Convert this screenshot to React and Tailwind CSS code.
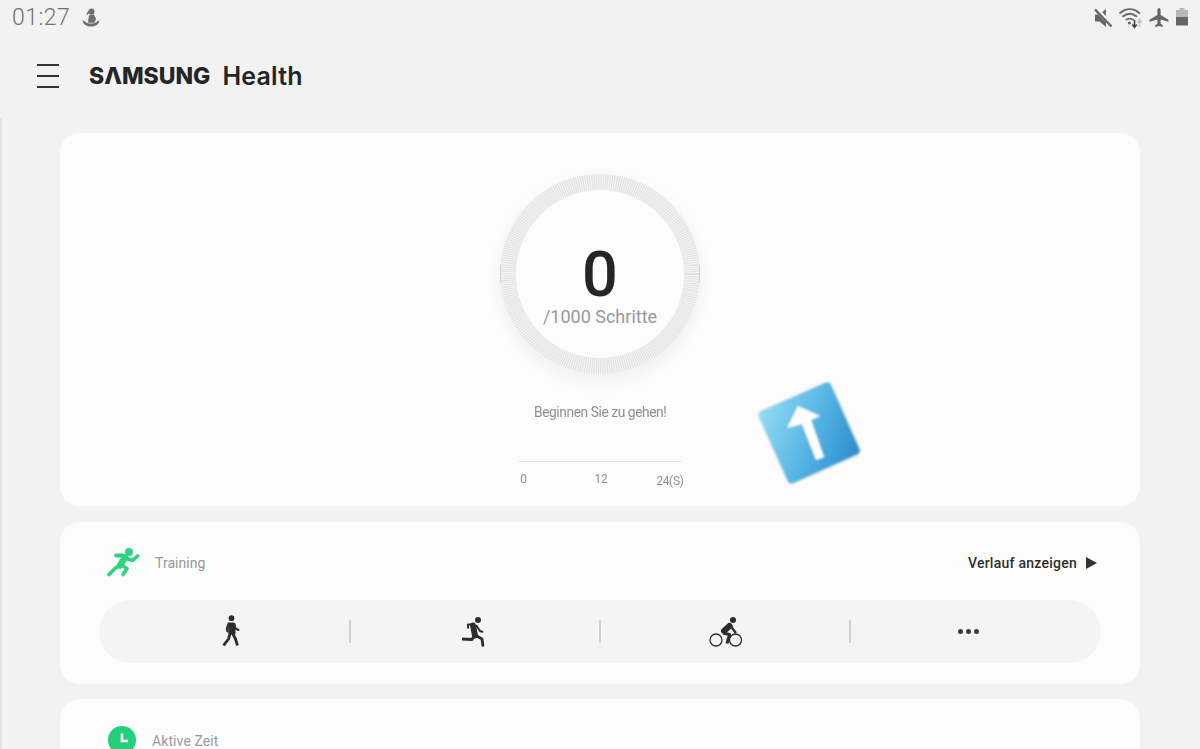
import React from "react";

const roboto = { fontFamily: "Roboto, sans-serif" };
const inter = { fontFamily: "Inter, sans-serif" };

function MuteIcon() {
  return (
    <svg width="20" height="20" viewBox="0 0 20 20" className="text-[#666]">
      <path d="M2 6.500h4.500L13 1v18l-6.500-5.500H2z" fill="currentColor" />
      <path d="M2 0 L19 17.500" stroke="#f2f2f2" strokeWidth="4.500" />
      <path d="M2 1.500 L18.500 18.500" stroke="currentColor" strokeWidth="2.400" />
    </svg>
  );
}

function WifiIcon() {
  return (
    <svg width="26" height="22" viewBox="0 0 26 22" fill="none" className="text-[#6a6a6a]">
      <path d="M1.500 6.500C8 0.800 15.500 .8 22 6.500" stroke="currentColor" strokeWidth="1.800" />
      <path d="M4.500 9.800C9 6 14.500 6 19 9.800" stroke="currentColor" strokeWidth="1.800" />
      <path d="M7.800 13C10.500 11 13 11 15.800 13" stroke="currentColor" strokeWidth="1.800" />
      <circle cx="11.500" cy="16" r="1.600" fill="currentColor" />
      <path d="M16.500 13v7M14.300 17.500l2.200 3 2.200-3" stroke="#444" strokeWidth="1.600" />
      <path d="M21.500 20v-7M19.600 15.500l1.900-3 1.900 3" stroke="#c4c4c4" strokeWidth="1.600" />
    </svg>
  );
}

function PlaneIcon() {
  return (
    <svg width="20" height="20" viewBox="0 0 20 20" className="text-[#666]">
      <path d="M10 0c1 0 1.600 1.200 1.600 2.600V7l7.900 4.700v2L11.600 11.400v4.200l2.300 1.800V19L10 18l-3.900 1v-1.600l2.300-1.800v-4.200L.5 13.700v-2L8.400 7V2.600C8.400 1.200 9 0 10 0z" fill="currentColor" />
    </svg>
  );
}

function BatteryIcon() {
  return (
    <svg width="12" height="19" viewBox="0 0 12 19">
      <rect x="3.500" y="0" width="5" height="2" fill="#b8b8b8" />
      <rect x="0" y="2" width="12" height="7" fill="#b8b8b8" />
      <rect x="0" y="9" width="12" height="8.500" fill="#666" />
    </svg>
  );
}

function PersonIcon() {
  return (
    <svg width="18" height="20" viewBox="0 0 18 20" fill="none" className="text-[#6e6e6e]">
      <circle cx="9.500" cy="3.500" r="3" fill="currentColor" />
      <path d="M7 3C5.500 3.500 4 5 5 7.500C5.800 6 6.500 5.500 7.500 5.500z" fill="currentColor" />
      <path d="M7.500 6.500h4.500L14 11l-1.500 3.800H6L6.500 10z" fill="currentColor" />
      <path d="M.8 12C.5 16 4 18.500 9 18.500s8.500-2.500 8.200-6.500l-2.700 2C13 15.500 11 15.500 9 15.500s-4-.2-5.500-1.500z" fill="currentColor" />
    </svg>
  );
}

function GreenRunner() {
  return (
    <svg width="34" height="31" viewBox="0 0 34 31" fill="none">
      <circle cx="22" cy="5" r="4" fill="#2fd37f" />
      <path d="M9 8.500h6" stroke="#2fd37f" strokeWidth="4" strokeLinecap="round" />
      <path d="M15 8.500l6 3.500 4.500 1.500 5-4.500" stroke="#2fd37f" strokeWidth="3.600" strokeLinecap="round" strokeLinejoin="round" />
      <path d="M18 10.500l-5 8" stroke="#2fd37f" strokeWidth="6.500" strokeLinecap="round" />
      <path d="M13 18l-5 3.500-6 6" stroke="#2fd37f" strokeWidth="3.600" strokeLinecap="round" strokeLinejoin="round" />
      <path d="M15 18.500l5 3-4 6" stroke="#2fd37f" strokeWidth="3.600" strokeLinecap="round" strokeLinejoin="round" />
    </svg>
  );
}

function WalkIcon() {
  return (
    <svg width="18" height="32" viewBox="0 0 18 32" fill="none">
      <circle cx="9.500" cy="3.200" r="2.900" fill="#2b2e2b" />
      <path d="M6.500 8h5.500l1 6v5H7z" fill="#2b2e2b" stroke="#2b2e2b" strokeWidth="1" strokeLinejoin="round" />
      <path d="M6.500 8.500L4.800 13.500l.6 3" stroke="#2b2e2b" strokeWidth="2" strokeLinecap="round" />
      <path d="M12.500 9l1 4.500 3 1.500" stroke="#2b2e2b" strokeWidth="2" strokeLinecap="round" />
      <path d="M8.200 18l-1.700 6-5 6.500" stroke="#2b2e2b" strokeWidth="2.800" strokeLinejoin="round" />
      <path d="M10.500 18l3 6 2 6.500" stroke="#2b2e2b" strokeWidth="2.800" strokeLinejoin="round" />
    </svg>
  );
}

function RunIcon() {
  return (
    <svg width="26" height="31" viewBox="0 0 26 31" fill="none">
      <circle cx="17" cy="4" r="3" fill="#2b2e2b" />
      <path d="M12 9.500l2 10" stroke="#2b2e2b" strokeWidth="6" strokeLinecap="round" />
      <path d="M13 8.500H7L7 12.500" stroke="#2b2e2b" strokeWidth="2" strokeLinejoin="round" />
      <path d="M15 9l4 6 3 1" stroke="#2b2e2b" strokeWidth="2" strokeLinejoin="round" />
      <path d="M13 20l-2 3.500-10 -.5" stroke="#2b2e2b" strokeWidth="2.800" strokeLinejoin="round" />
      <path d="M15 19.500l6 3.500 1 7.500" stroke="#2b2e2b" strokeWidth="2.800" strokeLinejoin="round" />
    </svg>
  );
}

function BikeIcon() {
  return (
    <svg width="34" height="31" viewBox="0 0 34 31" fill="none">
      <circle cx="24" cy="4" r="3" fill="#2b2e2b" />
      <circle cx="7" cy="24" r="6" stroke="#2b2e2b" strokeWidth="1.300" />
      <circle cx="26.500" cy="24" r="6" stroke="#2b2e2b" strokeWidth="1.300" />
      <path d="M20.500 10L15 15" stroke="#2b2e2b" strokeWidth="6" strokeLinecap="round" />
      <path d="M21 9l5.500 7.500" stroke="#2b2e2b" strokeWidth="2.200" strokeLinecap="round" />
      <path d="M14 17l6.500 1.500-2.500 9" stroke="#2b2e2b" strokeWidth="3" strokeLinejoin="round" />
    </svg>
  );
}

function StepRing() {
  return (
    <svg width="240" height="240" viewBox="0 0 240 240" className="absolute left-[-20px] top-[-20px]" fill="none">
      <defs>
        <filter id="ringShadow" x="-30%" y="-30%" width="160%" height="160%">
          <feDropShadow dx="0" dy="7" stdDeviation="8" floodColor="#000" floodOpacity="0.05" />
        </filter>
      </defs>
      <circle cx="120" cy="120" r="100" fill="#fcfcfc" filter="url(#ringShadow)" />
      <circle cx="120" cy="120" r="92" stroke="#f4f4f4" strokeWidth="16" />
      <circle cx="120" cy="120" r="92" stroke="#e0e0e0" strokeWidth="16" strokeDasharray="1 1.200" />
      <path d="M20.500 111v18M219.500 111v18" stroke="#d4d4d4" strokeWidth="1" />
    </svg>
  );
}

function ArrowTile() {
  return (
    <svg width="116" height="116" viewBox="0 0 116 116" className="absolute left-[751px] top-[374px]">
      <defs>
        <linearGradient id="tile" x1="0" y1="0" x2="1" y2="1">
          <stop offset="0" stopColor="#93dcf5" />
          <stop offset="0.5" stopColor="#58b6e4" />
          <stop offset="1" stopColor="#2a8ccd" />
        </linearGradient>
        <filter id="soft" x="-20%" y="-20%" width="140%" height="140%">
          <feGaussianBlur stdDeviation="0.800" />
        </filter>
      </defs>
      <g filter="url(#soft)">
        <g transform="rotate(-24 58 58)">
          <rect x="18" y="19" width="80" height="80" rx="5" fill="#b9d6e6" />
          <rect x="19" y="20" width="78" height="78" rx="4" fill="url(#tile)" />
        </g>
        <path d="M47 32 L69 42 L60 46 L73 83 L65 86 L51 50 L36 54 Z" fill="#fff" />
      </g>
    </svg>
  );
}

export default function App() {
  return (
    <div className="relative h-[749px] w-[1200px] overflow-hidden bg-[#f2f2f2]" style={roboto}>
      <div className="flex h-[35px] items-center justify-between pl-3 pr-3">
        <div className="flex items-center gap-[12px]">
          <span className="mt-[2px] text-[23px] font-light tracking-[0.5px] text-[#707070]">01:27</span>
          <PersonIcon />
        </div>
        <div className="flex items-center gap-[5px]">
          <span className="ml-[2px]"><MuteIcon /></span>
          <WifiIcon />
          <PlaneIcon />
          <span className="ml-[2px]"><BatteryIcon /></span>
        </div>
      </div>

      <div className="flex h-[83px] items-center pb-[1px] pl-[37px]">
        <div className="mr-[30px] flex h-[24px] w-[22px] flex-col justify-between">
          <div className="h-[2px] bg-[#333]" />
          <div className="h-[2px] bg-[#333]" />
          <div className="h-[2px] bg-[#333]" />
        </div>
        <span className="text-[23px] font-extrabold tracking-[0px] text-[#252525]" style={inter}>SΛMSUNG</span>
        <span className="ml-[12px] mt-[2px] text-[25px] font-semibold tracking-[0.2px] text-[#252525]" style={inter}>Health</span>
      </div>

      <div className="flex flex-col gap-[15.500px] border-l-2 border-[#e4e4e4] pl-[58px] pr-[60px] pt-[15px]">
        <div className="flex h-[373px] flex-col items-center rounded-[20px] bg-[#fcfcfc] pt-[41px]">
          <div className="relative h-[200px] w-[200px]">
            <StepRing />
            <div className="absolute inset-0 flex flex-col items-center">
              <span className="mt-[64px] text-[63px] font-medium leading-[74px] text-[#252525]">0</span>
              <span className="mt-[-7px] text-[18px] leading-[24px] text-[#999]">/1000 Schritte</span>
            </div>
          </div>
          <p className="mt-[28px] scale-x-[0.917] text-[15px] leading-[20px] tracking-[-0.45px] text-[#8f8f8f]">Beginnen Sie zu gehen!</p>
          <div className="mt-[39px] h-px w-[162px] bg-[#e0e0e0]" />
          <div className="relative mt-[9px] h-[20px] w-[162px] text-[13px] leading-[16px] tracking-[-0.3px] text-[#8f8f8f]">
            <div className="flex items-start justify-between">
              <span className="ml-[1px] w-[8px] scale-x-[0.92]">0</span>
              <span className="ml-[19px] scale-x-[0.92]">12</span>
              <span className="mr-[-4px] mt-[2px] scale-x-[0.92]">24(S)</span>
            </div>
          </div>
        </div>

        <div className="h-[162px] rounded-[20px] bg-[#fcfcfc] px-[39px] pt-[25px]">
          <div className="flex h-[32px] items-center justify-between pl-[8px] pr-[4px]">
            <div className="flex items-center gap-[14px]">
              <GreenRunner />
              <span className="mt-[2px] text-[14px] tracking-[0.05px] text-[#999]">Training</span>
            </div>
            <div className="flex items-center gap-[9px]">
              <span className="mt-[2px] text-[14px] font-medium tracking-[0.25px] text-[#2e2e2e]">Verlauf anzeigen</span>
              <svg width="11" height="12" viewBox="0 0 11 12"><path d="M0 0l11 6-11 6z" fill="#333" /></svg>
            </div>
          </div>
          <div className="mt-[21px] flex h-[63px] items-center rounded-full bg-[#f4f4f4]">
            <div className="flex w-[250px] justify-center pl-[14px]"><WalkIcon /></div>
            <div className="h-[23px] w-[2px] bg-[#cfcfcf]" />
            <div className="flex w-[248px] justify-center pr-[2px]"><RunIcon /></div>
            <div className="h-[23px] w-[2px] bg-[#cfcfcf]" />
            <div className="flex w-[248px] justify-center pl-[2px]"><BikeIcon /></div>
            <div className="h-[23px] w-[2px] bg-[#cfcfcf]" />
            <div className="flex w-[250px] justify-center gap-[3px] pr-[16px]">
              <span className="h-[5px] w-[5px] rounded-full bg-[#3a3a3a]" />
              <span className="h-[5px] w-[5px] rounded-full bg-[#3a3a3a]" />
              <span className="h-[5px] w-[5px] rounded-full bg-[#3a3a3a]" />
            </div>
          </div>
        </div>

        <div className="h-[120px] rounded-[20px] bg-[#fcfcfc] pl-[48px] pt-[27px]">
          <div className="flex items-center gap-[16px]">
            <svg width="28" height="28" viewBox="0 0 28 28">
              <circle cx="14" cy="14" r="14" fill="#22d07a" />
              <path d="M14 7.500v7.500h6" stroke="#fcfcfc" strokeWidth="2.600" fill="none" />
            </svg>
            <span className="mt-[3px] text-[14px] tracking-[0.1px] text-[#999]">Aktive Zeit</span>
          </div>
        </div>
      </div>

      <ArrowTile />
    </div>
  );
}
